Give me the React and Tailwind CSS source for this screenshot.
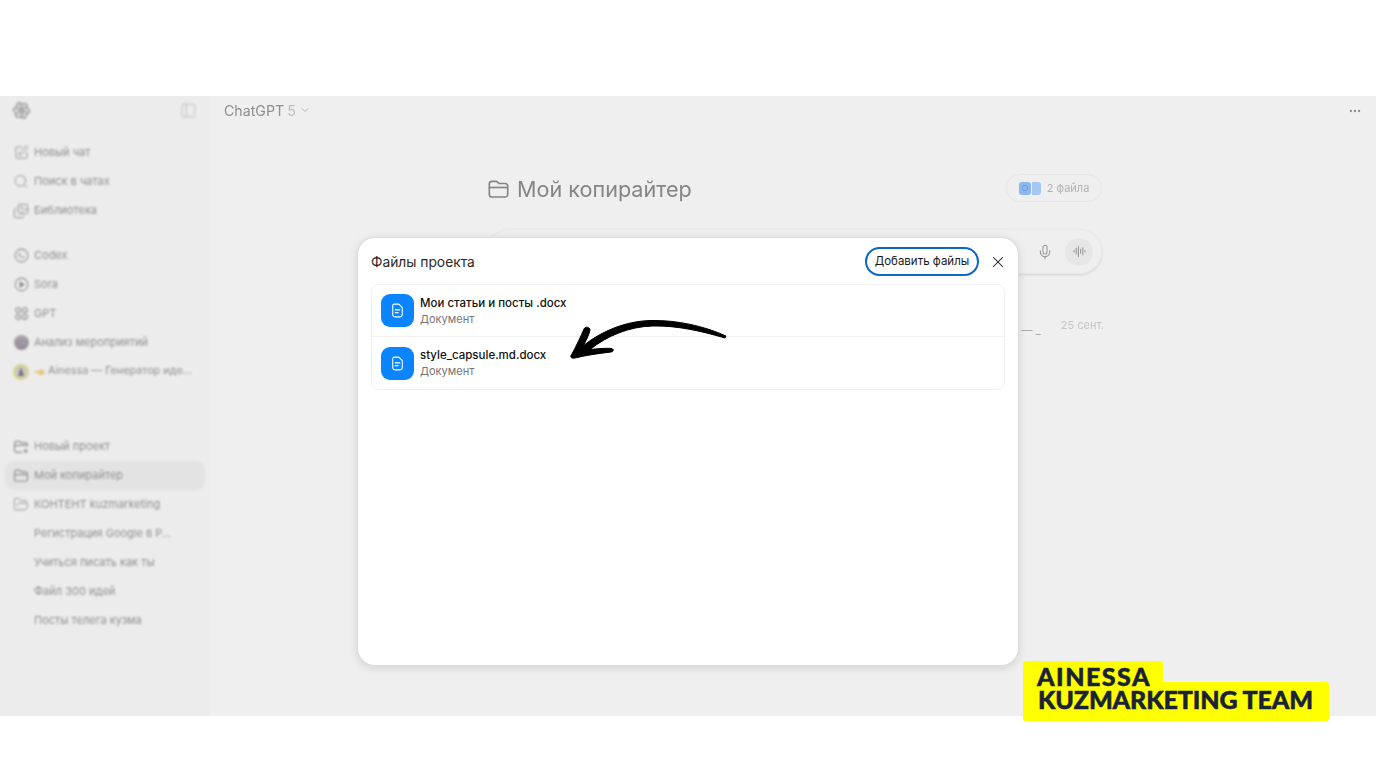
import React from 'react';
import { SquarePen, Search, Images, FolderOpen, PanelLeft, ChevronDown, Ellipsis, Mic, AudioLines, X } from 'lucide-react';
import { TbBrandOpenai } from 'react-icons/tb';

// --- SVG Icons ---
const CodexIcon = () => (
  <svg viewBox="0 0 16 16" fill="none" stroke="currentColor" strokeWidth="1.1" strokeLinecap="round" strokeLinejoin="round" className="w-[15px] h-[15px]">
    <circle cx="8" cy="8" r="6.8" />
    <path d="M5.2 6 6.8 7.6 5.2 9.2M8.2 10h2.4" />
  </svg>
);

const SoraIcon = () => (
  <svg viewBox="0 0 16 16" fill="none" stroke="currentColor" strokeWidth="1.1" className="w-[15px] h-[15px]">
    <circle cx="8" cy="8" r="6.8" />
    <path d="M6.4 5.4v5.2L10.6 8Z" fill="currentColor" strokeLinejoin="round" />
  </svg>
);

const GptIcon = () => (
  <svg viewBox="0 0 16 16" fill="none" stroke="currentColor" strokeWidth="1.2" className="w-[15px] h-[15px]">
    <circle cx="4.4" cy="4.4" r="2.5" />
    <circle cx="11.6" cy="4.4" r="2.5" />
    <circle cx="4.4" cy="11.6" r="2.5" />
    <circle cx="11.6" cy="11.6" r="2.5" />
  </svg>
);

const FolderIcon = ({ className }) => (
  <svg viewBox="0 0 16 16" fill="none" stroke="currentColor" strokeWidth="1.15" strokeLinejoin="round" className={className}>
    <path d="M1.6 4.2a1.8 1.8 0 0 1 1.8-1.8h2.8c.5 0 1 .2 1.3.6l.7.8h4.4a1.8 1.8 0 0 1 1.8 1.8v5.8a1.8 1.8 0 0 1-1.8 1.8H3.4a1.8 1.8 0 0 1-1.8-1.8Z" />
    <path d="M1.6 6.6h12.8" />
  </svg>
);

const NewFolderIcon = () => (
  <svg viewBox="0 0 16 16" fill="none" stroke="currentColor" strokeWidth="1.15" strokeLinecap="round" strokeLinejoin="round" className="w-[16px] h-[16px]">
    <path d="M8.6 13.4H3.4a1.8 1.8 0 0 1-1.8-1.8V4.2a1.8 1.8 0 0 1 1.8-1.8h2.8c.5 0 1 .2 1.3.6l.7.8h4.4a1.8 1.8 0 0 1 1.8 1.8v1" />
    <path d="M1.6 6.4h12.8M12.6 10v4M10.6 12h4" />
  </svg>
);

const EventAvatar = () => (
  <div className="w-[15px] h-[15px] rounded-full bg-gradient-to-b from-[#a9a4ab] to-[#8f8a94]" />
);

const AinessaAvatar = () => (
  <svg viewBox="0 0 16 16" className="w-[16px] h-[16px]">
    <circle cx="8" cy="8" r="8" fill="#d8d67a" />
    <circle cx="8" cy="8" r="6.4" fill="#c9c9c4" />
    <path d="M8 3 11 12H5Z" fill="#77777a" />
  </svg>
);

const PointingHand = () => (
  <svg viewBox="0 0 12 8" className="w-[11px] h-[8px]">
    <path d="M0 3.4 5 2.6 6.4 1.2 11 2.2 11.6 6.4 7 7.6 4 5.4 .4 4.6Z" fill="#ecc37e" />
  </svg>
);

const DocIcon = () => (
  <svg viewBox="0 0 16 16" fill="none" stroke="white" strokeWidth="1" strokeLinecap="round" strokeLinejoin="round" className="w-[17px] h-[17px]">
    <path d="M5 2h4.2l3.3 3.3v6.4A2.3 2.3 0 0 1 10.2 14H5.8a2.3 2.3 0 0 1-2.3-2.3V3.5A1.5 1.5 0 0 1 5 2Z" />
    <path d="M5.8 7.4h4.4M5.8 10h2.8" />
  </svg>
);

const HandArrow = () => (
  <svg viewBox="0 0 170 50" className="absolute left-[207px] top-[77px] w-[170px] h-[50px]">
    <path
      fill="black"
      stroke="black"
      strokeWidth="1"
      strokeLinejoin="round"
      d="M6 40.5 C7 39 12 30 19 14 C20 11 25 12 25 15 C24 20 21 26 18 31 C35 17 60 6 86 5.5 C112 5 139 11 161 21 L160 23 C136 16 112 10.5 88 11 C64 11.5 42 21 25 34.5 C32 33.8 40 33 46 33.4 C49 33.7 49 36.6 46 37 C34 38.5 22 40 10 43 C7 43.5 5 42.5 6 40.5 Z"
    />
  </svg>
);

// --- Data ---
const topItems = [
  { label: 'Новый чат', icon: <SquarePen size={15} strokeWidth={1.4} /> },
  { label: 'Поиск в чатах', icon: <Search size={17} strokeWidth={1.3} /> },
  { label: 'Библиотека', icon: <Images size={16} strokeWidth={1.4} /> },
];

const appItems = [
  { label: 'Codex', icon: <CodexIcon /> },
  { label: 'Sora', icon: <SoraIcon /> },
  { label: 'GPT', icon: <GptIcon /> },
  { label: 'Анализ мероприятий', icon: <EventAvatar /> },
];

const projectItems = [
  { label: 'Новый проект', icon: <NewFolderIcon /> },
  { label: 'Мой копирайтер', icon: <FolderIcon className="w-[16px] h-[16px]" />, active: true },
  { label: 'КОНТЕНТ kuzmarketing', icon: <FolderOpen size={17} strokeWidth={1.2} /> },
];

const chatItems = ['Регистрация Google в Р...', 'Учиться писать как ты', 'Файл 300 идей', 'Посты телега кузма'];

const files = ['Мои статьи и посты .docx', 'style_capsule.md.docx'];

// --- Sidebar row ---
const SideRow = ({ icon, label, active }) => (
  <div className={`h-[29px] flex items-center gap-[5px] mx-[5px] px-[8px] rounded-[9px] whitespace-nowrap ${active ? 'bg-[#e3e3e3]' : ''}`}>
    <span className="w-[16px] flex justify-center text-[#8c8c8c] shrink-0">{icon}</span>
    <span>{label}</span>
  </div>
);

const FileRow = ({ name, last }) => (
  <div className={`h-[52px] flex items-center px-[9px] gap-[6px] ${last ? '' : 'border-b border-[#f1f1f1]'}`}>
    <div className="w-[33px] h-[33px] rounded-[9px] bg-[#0a85ff] flex items-center justify-center">
      <DocIcon />
    </div>
    <div className="flex flex-col">
      <span className="text-[11.5px] leading-[16px] font-medium text-[#111111]">{name}</span>
      <span className="text-[11px] leading-[16px] text-[#767676]">Документ</span>
    </div>
  </div>
);

// --- Main ---
export default function App() {
  return (
    <div className="relative w-[1376px] h-[768px] overflow-hidden bg-white font-['Inter',sans-serif]">
      <div className="mt-[96px] h-[620px] flex bg-[#efefef]">
        {/* Sidebar */}
        <aside className="w-[210px] shrink-0 bg-[#ececec]">
          <div className="blur-[0.8px] text-[11px] text-[#8f8f8f]">
            <div className="h-[29px] flex items-center justify-between pl-[12px] pr-[13px]">
              <TbBrandOpenai size={19} strokeWidth={1.4} className="text-[#858585]" />
              <PanelLeft size={17} strokeWidth={1.1} className="text-[#b5b5b5]" />
            </div>
            <div className="mt-[13px]">
              {topItems.map((item) => <SideRow key={item.label} {...item} />)}
            </div>
            <div className="mt-[16px]">
              {appItems.map((item) => <SideRow key={item.label} {...item} />)}
              <div className="h-[29px] flex items-center gap-[5px] mx-[5px] px-[8px] whitespace-nowrap">
                <span className="w-[16px] shrink-0"><AinessaAvatar /></span>
                <PointingHand />
                <span className="ml-[-2px] text-[10.8px]">Ainessa — Генератор иде...</span>
              </div>
            </div>
            <div className="mt-[46px]">
              {projectItems.map((item) => <SideRow key={item.label} {...item} />)}
              {chatItems.map((chat) => (
                <div key={chat} className="h-[29px] flex items-center pl-[34px] whitespace-nowrap">{chat}</div>
              ))}
            </div>
          </div>
        </aside>

        {/* Main area */}
        <main className="flex-1 min-w-0">
          <div className="blur-[0.7px]">
            <header className="h-[29px] flex items-center justify-between pl-[14px] pr-[14px]">
              <div className="flex items-center gap-[3px] text-[14.2px] text-[#8e8e8e]">
                <span>ChatGPT</span>
                <span className="text-[#bdbdbd]">5</span>
                <ChevronDown size={12} className="text-[#b5b5b5]" />
              </div>
              <Ellipsis size={14} className="text-[#8c8c8c]" />
            </header>

            <div className="w-[615px] ml-[277px] mt-[50px]">
              <div className="h-[28px] flex items-center justify-between">
                <div className="flex items-center gap-[7px] text-[21.6px] text-[#858585]">
                  <FolderIcon className="w-[23px] h-[23px]" />
                  <span>Мой копирайтер</span>
                </div>
                <div className="h-[28px] w-[96px] mt-[-2px] rounded-full border border-[#e6e6e6] flex items-center justify-center gap-[6px] text-[11px] text-[#b3b3b3]">
                  <div className="flex gap-[1px]">
                    <span className="w-[12px] h-[13px] rounded-[3px] bg-[#8db8ef] flex items-center justify-center">
                      <span className="w-[6px] h-[6px] rounded-[2px] border border-[#6f9fdd]" />
                    </span>
                    <span className="w-[9px] h-[13px] rounded-r-[3px] bg-[#a5c8f1]" />
                  </div>
                  <span>2 файла</span>
                </div>
              </div>

              <div className="mt-[26px] h-[45px] rounded-full border border-[#e8e8e8] shadow-sm flex items-center justify-end gap-[10px] pr-[8px]">
                <Mic size={16} strokeWidth={1.8} className="text-[#a0a0a0]" />
                <div className="ml-[2px] w-[28px] h-[28px] rounded-full bg-[#e6e6e6] flex items-center justify-center">
                  <AudioLines size={13} className="text-[#9a9a9a]" />
                </div>
              </div>

              <div className="mt-[43px] flex justify-end items-start gap-[20px] text-[11px] text-[#c4c4c4] mr-[-2px]">
                <span className="mt-[5px] text-[#a5a5a5]">— _</span>
                <span>25 сент.</span>
              </div>
            </div>
          </div>
        </main>
      </div>

      {/* Project files modal */}
      <div className="absolute left-[357px] top-[237px] w-[662px] h-[429px] bg-white rounded-[18px] border border-[#dcdcdc] shadow-[0_2px_10px_rgba(0,0,0,0.12)]">
        <div className="h-[46px] flex items-center justify-between pl-[13px] pr-[11px]">
          <h2 className="text-[13.8px] text-[#2a2a2a] mt-[2px]">Файлы проекта</h2>
          <div className="flex items-center gap-[10px] mt-[1px]">
            <button type="button" className="w-[114px] h-[29px] rounded-full border-2 border-[#0d66c9] text-[11.5px] text-[#1a1a1a] flex items-center justify-center">
              Добавить файлы
            </button>
            <X size={18} strokeWidth={1.4} className="text-[#1a1a1a]" />
          </div>
        </div>
        <div className="mx-[13px] border border-[#f1f1f1] rounded-[8px]">
          {files.map((name, i) => (
            <FileRow key={name} name={name} last={i === files.length - 1} />
          ))}
        </div>
        <HandArrow />
      </div>

      {/* Brand badge */}
      <div className="absolute left-[1023px] top-[661px] flex flex-col items-start font-['Lato',sans-serif] font-black text-[#1a2238] [-webkit-text-stroke:0.5px_#1a2238]">
        <div className="relative z-10 w-[140px] h-[29px] bg-[#ffff00] rounded-[3px] pl-[14px] pt-[5px] text-[25px] leading-[21px] tracking-[1.5px]">AINESSA</div>
        <div className="w-[306px] h-[39px] mt-[-8px] bg-[#ffff00] rounded-[3px] pl-[15px] pt-[7px] text-[25px] leading-[20px] tracking-[-0.1px] whitespace-nowrap">KUZMARKETING TEAM</div>
      </div>
    </div>
  );
}
